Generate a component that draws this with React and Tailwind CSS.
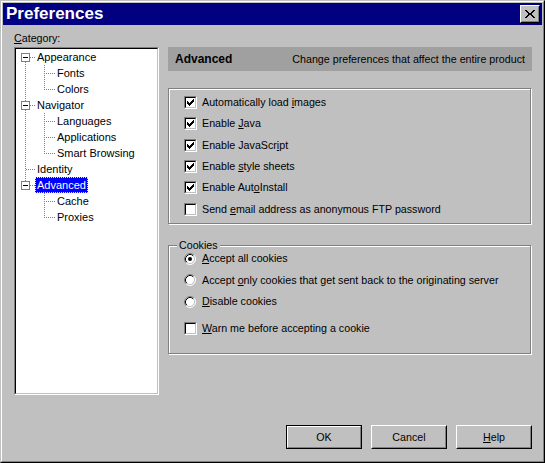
import React from "react";

const treeRows = [
    { label: "Appearance", level: 0, box: true },
    { label: "Fonts", level: 1 },
    { label: "Colors", level: 1 },
    { label: "Navigator", level: 0, box: true },
    { label: "Languages", level: 1 },
    { label: "Applications", level: 1 },
    { label: "Smart Browsing", level: 1 },
    { label: "Identity", level: 0 },
    { label: "Advanced", level: 0, box: true, selected: true },
    { label: "Cache", level: 1 },
    { label: "Proxies", level: 1 },
];

// dotted connector lines, one pixel on / one pixel off like the old tree view
const buildDots = () => {
    const dots = [];
    const vline = (x, y1, y2) => {
        for (let y = y1; y <= y2; y++) if ((x + y) % 2 === 0) dots.push([x, y]);
    };
    const hline = (y, x1, x2) => {
        for (let x = x1; x <= x2; x++) if ((x + y) % 2 === 0) dots.push([x, y]);
    };
    vline(9, 13, 131);
    [8, 56, 136].forEach((y) => hline(y, 14, 18));
    hline(120, 10, 18);
    vline(28, 16, 40);
    vline(28, 64, 104);
    vline(28, 144, 168);
    [24, 40, 72, 88, 104, 152, 168].forEach((y) => hline(y, 29, 38));
    return dots.map(([x, y]) => `M${x} ${y}h1v1h-1z`).join("");
};

const boxRows = [8, 56, 136];

const TreeLines = () => (
    <svg
        className="absolute left-0 top-0 pointer-events-none"
        width="141"
        height="344"
        shapeRendering="crispEdges"
    >
        <path d={buildDots()} fill="#808080" />
        {boxRows.map((c) => (
            <g key={c}>
                <rect x="5.5" y={c - 3.5} width="8" height="8" fill="#fff" stroke="#808080" />
                <rect x="7" y={c} width="5" height="1" fill="#000" />
            </g>
        ))}
    </svg>
);

const CheckMark = () => (
    <svg className="absolute left-px top-px" width="7" height="7" shapeRendering="crispEdges">
        <path
            d="M0 2h1v3H0z M1 3h1v3H1z M2 4h1v3H2z M3 3h1v3H3z M4 2h1v3H4z M5 1h1v3H5z M6 0h1v3H6z"
            fill="#000"
        />
    </svg>
);

const CheckBox = ({ checked }) => (
    <span className="block w-[13px] h-[13px] shrink-0 border border-t-[#808080] border-l-[#808080] border-b-white border-r-white">
        <span className="block relative w-full h-full bg-white border border-t-black border-l-black border-b-[#c0c0c0] border-r-[#c0c0c0]">
            {checked && <CheckMark />}
        </span>
    </span>
);

const Radio = ({ checked }) => (
    <svg width="12" height="12" className="shrink-0">
        <circle cx="6" cy="6" r="5" fill="#fff" />
        <path d="M2.11 9.89 A5.5 5.5 0 0 1 9.89 2.11" fill="none" stroke="#808080" />
        <path d="M9.89 2.11 A5.5 5.5 0 0 1 2.11 9.89" fill="none" stroke="#fff" />
        <path d="M2.82 9.18 A4.5 4.5 0 0 1 9.18 2.82" fill="none" stroke="#000" />
        <path d="M9.18 2.82 A4.5 4.5 0 0 1 2.82 9.18" fill="none" stroke="#c0c0c0" />
        {checked && <circle cx="6" cy="6" r="2" fill="#000" />}
    </svg>
);

// label with one underlined access key
const Label = ({ text, keyAt }) => {
    if (keyAt === undefined) return <span>{text}</span>;
    return (
        <span>
            {text.slice(0, keyAt)}
            <span className="underline underline-offset-1">{text[keyAt]}</span>
            {text.slice(keyAt + 1)}
        </span>
    );
};

const options = [
    { text: "Automatically load images", keyAt: 19, checked: true },
    { text: "Enable Java", keyAt: 7, checked: true },
    { text: "Enable JavaScript", keyAt: 14, checked: true },
    { text: "Enable style sheets", keyAt: 7, checked: true },
    { text: "Enable AutoInstall", keyAt: 10, checked: true },
    { text: "Send email address as anonymous FTP password", keyAt: 5, checked: false },
];

const cookieChoices = [
    { text: "Accept all cookies", keyAt: 0, checked: true },
    { text: "Accept only cookies that get sent back to the originating server", keyAt: 7 },
    { text: "Disable cookies", keyAt: 0 },
];

const CloseGlyph = () => (
    <svg width="10" height="8" shapeRendering="crispEdges">
        <path
            d="M0 0h2v1H0z M8 0h2v1H8z M1 1h2v1H1z M7 1h2v1H7z M2 2h2v1H2z M6 2h2v1H6z M3 3h4v2H3z M2 5h2v1H2z M6 5h2v1H6z M1 6h2v1H1z M7 6h2v1H7z M0 7h2v1H0z M8 7h2v1H8z"
            fill="#000"
        />
    </svg>
);

const Button = ({ children, isDefault }) => {
    if (isDefault) {
        return (
            <div className="w-[76px] h-[24px] border border-black">
                <span className="flex w-full h-full border border-t-white border-l-white border-b-[#808080] border-r-[#808080]">
                    <span className="flex items-center justify-center w-full h-full border border-transparent leading-[13px]">
                        {children}
                    </span>
                </span>
            </div>
        );
    }
    return (
        <div className="w-[76px] h-[24px]">
            <span className="flex items-center justify-center w-full h-full border border-t-white border-l-white border-b-black border-r-black">
                <span className="flex items-center justify-center w-full h-full border border-t-[#c0c0c0] border-l-[#c0c0c0] border-b-[#808080] border-r-[#808080] leading-[13px]">
                    {children}
                </span>
            </span>
        </div>
    );
};

export default function App() {
    return (
        <div className="w-[545px] h-[463px] bg-[#c0c0c0] border border-t-[#c0c0c0] border-l-[#c0c0c0] border-b-black border-r-black font-['Liberation_Sans',Arial,sans-serif] text-[10.7px] leading-[13px] text-black">
            <div className="h-full flex flex-col p-px border border-t-white border-l-white border-b-[#808080] border-r-[#808080]">
                {/* Title bar */}
                <div className="h-[22px] shrink-0 bg-[#000080] flex items-center justify-between pl-[3px] pr-[2px]">
                    <span className="text-white text-[17px] leading-[20px] font-bold">Preferences</span>
                    <div className="w-[20px] h-[18px] border border-t-white border-l-white border-b-black border-r-black bg-[#c0c0c0]">
                        <div className="w-full h-full flex items-center justify-center border border-t-[#c0c0c0] border-l-[#c0c0c0] border-b-[#808080] border-r-[#808080]">
                            <CloseGlyph />
                        </div>
                    </div>
                </div>

                {/* Body */}
                <div className="flex-1 flex flex-col pl-[11px] pr-[10px] pt-[7px]">
                    <div className="flex gap-[9px]">
                        {/* Category tree */}
                        <div className="w-[145px] shrink-0 flex flex-col">
                            <div className="h-[15px]">
                                <Label text="Category:" keyAt={0} />
                            </div>
                            <div className="h-[348px] border border-t-[#808080] border-l-[#808080] border-b-white border-r-white">
                                <div className="relative h-full bg-white border border-t-black border-l-black border-b-[#c0c0c0] border-r-[#c0c0c0] text-[11px]">
                                    {treeRows.map((row) => (
                                        <div key={row.label} className="h-4 flex items-center">
                                            <span
                                                className={
                                                    (row.level === 0 ? "ml-[19px] " : "ml-[39px] ") +
                                                    (row.selected
                                                        ? "bg-[#0000ff] text-white border border-dotted border-[#ffff00] px-px h-[16px] flex items-center"
                                                        : "border border-transparent px-px")
                                                }
                                            >
                                                {row.label}
                                            </span>
                                        </div>
                                    ))}
                                    <TreeLines />
                                </div>
                            </div>
                        </div>

                        {/* Right pane */}
                        <div className="flex-1 flex flex-col pt-[15px]">
                            <div className="h-[24px] bg-[#a0a0a0] flex items-center justify-between pl-[7px] pr-[7px]">
                                <span className="text-[12px] font-bold">Advanced</span>
                                <span>Change preferences that affect the entire product</span>
                            </div>

                            <div className="mt-[17px] w-[363px] h-[136px] border border-[#808080] shadow-[inset_1px_1px_0_#fff,1px_1px_0_#fff] pl-[15px] pt-[3px]">
                                {options.map((opt) => (
                                    <div key={opt.text} className="h-[21.3px] flex items-center gap-[5px]">
                                        <CheckBox checked={opt.checked} />
                                        <Label text={opt.text} keyAt={opt.keyAt} />
                                    </div>
                                ))}
                            </div>

                            <div className="relative mt-[21px] w-[363px] h-[109px] border border-[#808080] shadow-[inset_1px_1px_0_#fff,1px_1px_0_#fff] pl-[15px] pt-[2px]">
                                <span className="absolute -top-[7px] left-[8px] px-[2px] bg-[#c0c0c0]">Cookies</span>
                                {cookieChoices.map((c) => (
                                    <div key={c.text} className="h-[21.5px] flex items-center gap-[6px]">
                                        <Radio checked={c.checked} />
                                        <Label text={c.text} keyAt={c.keyAt} />
                                    </div>
                                ))}
                                <div className="mt-[5px] h-[21.5px] flex items-center gap-[5px]">
                                    <CheckBox checked={false} />
                                    <Label text="Warn me before accepting a cookie" keyAt={0} />
                                </div>
                            </div>
                        </div>
                    </div>

                    {/* Buttons */}
                    <div className="mt-[30px] flex justify-end gap-[9px]">
                        <Button isDefault>OK</Button>
                        <Button>Cancel</Button>
                        <Button>
                            <Label text="Help" keyAt={0} />
                        </Button>
                    </div>
                </div>
            </div>
        </div>
    );
}
